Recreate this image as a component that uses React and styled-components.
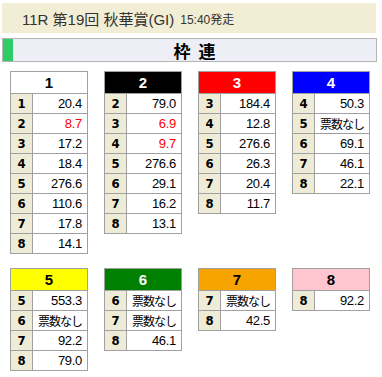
import React from "react";
import styled, { createGlobalStyle } from "styled-components";

const GlobalStyle = createGlobalStyle`
  html, body {
    margin: 0;
    padding: 0;
    background: #ffffff;
  }
  body {
    font-family: "Liberation Sans", "Noto Sans CJK JP", sans-serif;
  }
`;

const Page = styled.div`
  width: 382px;
  height: 377px;
  padding: 3px 0 0 2px;
  box-sizing: border-box;
  overflow: hidden;
`;

const RaceHeader = styled.div`
  width: 374px;
  height: 30px;
  box-sizing: border-box;
  background: #f1eed5;
  display: flex;
  align-items: center;
  padding-left: 20px;
  color: #333333;
  font-family: "Liberation Sans", "Noto Sans CJK JP", sans-serif;
  font-size: 15px;
`;

const Small = styled.span`
  font-size: 12px;
  margin-left: 6px;
`;

const TitleBar = styled.div`
  margin-top: 5px;
  width: 375px;
  height: 24px;
  box-sizing: border-box;
  border: 1px solid #b4b4b4;
  background: #eeeef7;
  display: flex;
  align-items: stretch;
`;

const Marker = styled.div`
  width: 10px;
  background: #2ecc66;
`;

const TitleText = styled.div`
  flex: 1;
  display: flex;
  align-items: center;
  justify-content: center;
  font-family: "Noto Sans CJK JP", sans-serif;
  font-weight: bold;
  font-size: 17px;
  color: #000;
  word-spacing: 4px;
`;

const Grid = styled.div`
  margin: 9px 0 0 8px;
  display: grid;
  grid-template-columns: repeat(4, 78px);
  column-gap: 16px;
  row-gap: 14px;
  align-items: start;
`;

const Card = styled.div`
  width: 78px;
  box-sizing: border-box;
  border: 1px solid #a0a0a0;
  background: #fff;
`;

const CardHead = styled.div`
  height: 21px;
  display: flex;
  align-items: center;
  justify-content: center;
  background: ${(p) => p.$bg};
  color: ${(p) => p.$fg};
  font-family: "Liberation Sans", sans-serif;
  font-weight: bold;
  font-size: 15px;
`;

const Row = styled.div`
  display: grid;
  grid-template-columns: 22px 1fr;
  height: 19px;
  border-top: 1px solid #a0a0a0;
`;

const Num = styled.div`
  background: #eeecd6;
  border-right: 1px solid #a0a0a0;
  display: flex;
  align-items: center;
  justify-content: center;
  font-family: "Liberation Sans Narrow", "DejaVu Sans Condensed", sans-serif;
  font-weight: bold;
  font-size: 13px;
  color: #000;
`;

const Value = styled.div`
  display: flex;
  align-items: center;
  justify-content: flex-end;
  padding-right: 5px;
  font-family: "Liberation Sans", "Noto Sans CJK JP", sans-serif;
  font-size: 13px;
  letter-spacing: -0.3px;
  color: ${(p) => (p.$hot ? "#ff0000" : "#000")};
`;

const NoVotes = styled.span`
  font-family: "Noto Sans CJK JP", sans-serif;
  font-size: 12px;
  letter-spacing: -1px;
`;

const waku = [
  { n: 1, bg: "#ffffff", fg: "#000", rows: [[1, "20.4"], [2, "8.7", true], [3, "17.2"], [4, "18.4"], [5, "276.6"], [6, "110.6"], [7, "17.8"], [8, "14.1"]] },
  { n: 2, bg: "#000000", fg: "#fff", rows: [[2, "79.0"], [3, "6.9", true], [4, "9.7", true], [5, "276.6"], [6, "29.1"], [7, "16.2"], [8, "13.1"]] },
  { n: 3, bg: "#ff0000", fg: "#fff", rows: [[3, "184.4"], [4, "12.8"], [5, "276.6"], [6, "26.3"], [7, "20.4"], [8, "11.7"]] },
  { n: 4, bg: "#0000ff", fg: "#fff", rows: [[4, "50.3"], [5, null], [6, "69.1"], [7, "46.1"], [8, "22.1"]] },
  { n: 5, bg: "#ffff00", fg: "#000", rows: [[5, "553.3"], [6, null], [7, "92.2"], [8, "79.0"]] },
  { n: 6, bg: "#008000", fg: "#fff", rows: [[6, null], [7, null], [8, "46.1"]] },
  { n: 7, bg: "#f8a400", fg: "#000", rows: [[7, null], [8, "42.5"]] },
  { n: 8, bg: "#ffc6cf", fg: "#000", rows: [[8, "92.2"]] },
];

export default function App() {
  return (
    <Page>
      <GlobalStyle />
      <RaceHeader>
        11R 第19回 秋華賞(GI)<Small>15:40発走</Small>
      </RaceHeader>
      <TitleBar>
        <Marker />
        <TitleText>枠 連</TitleText>
      </TitleBar>
      <Grid>
        {waku.map((w) => (
          <Card key={w.n}>
            <CardHead $bg={w.bg} $fg={w.fg}>{w.n}</CardHead>
            {w.rows.map(([k, v, hot]) => (
              <Row key={k}>
                <Num>{k}</Num>
                <Value $hot={hot}>{v === null ? <NoVotes>票数なし</NoVotes> : v}</Value>
              </Row>
            ))}
          </Card>
        ))}
      </Grid>
    </Page>
  );
}
